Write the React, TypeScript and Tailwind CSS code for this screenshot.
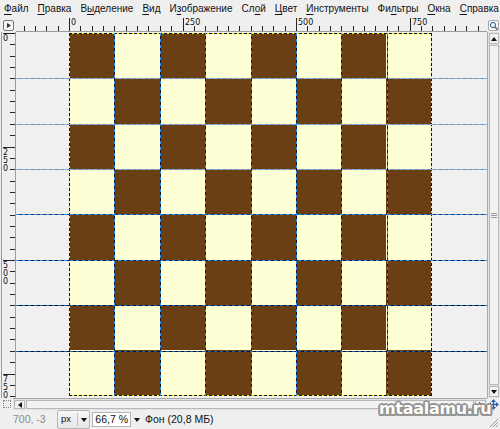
import React from 'react';

const menu: { label: string; u: number }[] = [
  { label: 'Файл', u: 0 },
  { label: 'Правка', u: 0 },
  { label: 'Выделение', u: 1 },
  { label: 'Вид', u: 0 },
  { label: 'Изображение', u: 1 },
  { label: 'Слой', u: 2 },
  { label: 'Цвет', u: 0 },
  { label: 'Инструменты', u: 0 },
  { label: 'Фильтры', u: 2 },
  { label: 'Окна', u: 0 },
  { label: 'Справка', u: 0 },
];

const STEP = 11.35;

// guide lines, positions relative to the canvas box
const hGuides = [
  'top-[46px] bg-[repeating-linear-gradient(90deg,#7fb4e6_0px,#7fb4e6_3px,#8c8c8c_3px,#8c8c8c_6px)]',
  'top-[92px] bg-[repeating-linear-gradient(90deg,#7fb4e6_0px,#7fb4e6_3px,#8c8c8c_3px,#8c8c8c_6px)]',
  'top-[137px] bg-[repeating-linear-gradient(90deg,#7fb4e6_0px,#7fb4e6_3px,#8c8c8c_3px,#8c8c8c_6px)]',
  'top-[182px] bg-[repeating-linear-gradient(90deg,#2b8cf2_0px,#2b8cf2_3px,#3a3a3a_3px,#3a3a3a_6px)]',
  'top-[228px] bg-[repeating-linear-gradient(90deg,#2b8cf2_0px,#2b8cf2_3px,#1a1a1a_3px,#1a1a1a_6px)]',
  'top-[273px] bg-[repeating-linear-gradient(90deg,#1d5fa8_0px,#1d5fa8_3px,#111_3px,#111_6px)]',
  'top-[319px] bg-[repeating-linear-gradient(90deg,#1d5fa8_0px,#1d5fa8_3px,#111_3px,#111_6px)]',
];

const vGuides = [
  'left-[98px]',
  'left-[144px]',
  'left-[189px]',
  'left-[235px]',
  'left-[280px]',
  'left-[325px]',
  'left-[371px]',
];

const HRuler = () => {
  const ticks = [];
  for (let k = -4; k <= 38; k++) {
    const x = Math.round(53 + k * STEP) + 0.5;
    if (x < 0 || x > 466) continue;
    const major = k % 10 === 0;
    ticks.push(
      <line key={k} x1={x} x2={x} y1={major ? 0 : 8} y2={13} stroke="#222" strokeWidth={1} />
    );
    if (major && k >= 0) {
      ticks.push(
        <text key={'t' + k} x={x + 1.5} y={7} fontSize={8} fill="#111" fontFamily="DejaVu Sans, sans-serif">
          {k * 25}
        </text>
      );
    }
  }
  return (
    <svg width={471} height={14} className="block">
      <line x1={0} x2={471} y1={13.5} y2={13.5} stroke="#9a9a9a" />
      {ticks}
    </svg>
  );
};

const VRuler = () => {
  const ticks = [];
  for (let k = 0; k <= 32; k++) {
    const y = Math.round(1 + k * STEP) + 0.5;
    const major = k % 10 === 0;
    ticks.push(
      <line key={k} y1={y} y2={y} x1={major ? 3 : 10} x2={15} stroke="#222" strokeWidth={1} />
    );
    if (major) {
      String(k * 25)
        .split('')
        .forEach((d, i) => {
          ticks.push(
            <text key={'t' + k + i} x={3} y={y + 7.5 + i * 8} fontSize={8} fill="#111" fontFamily="DejaVu Sans, sans-serif">
              {d}
            </text>
          );
        });
    }
  }
  return (
    <svg width={16} height={366} className="block">
      <line x1={1.5} x2={1.5} y1={0} y2={366} stroke="#9a9a9a" />
      <line x1={15.5} x2={15.5} y1={0} y2={366} stroke="#9a9a9a" />
      {ticks}
    </svg>
  );
};

const Arrow = ({ dir }: { dir: 'up' | 'down' | 'left' | 'right' }) => {
  const pts = {
    up: '1,5 4,1 7,5',
    down: '1,1 4,5 7,1',
    left: '5,1 1,4 5,7',
    right: '1,1 5,4 1,7',
  }[dir];
  const w = dir === 'up' || dir === 'down' ? 8 : 6;
  const h = dir === 'up' || dir === 'down' ? 6 : 8;
  return (
    <svg width={w} height={h} className="block">
      <polygon points={pts} fill="#111" />
    </svg>
  );
};

export default function App() {
  const cells = Array.from({ length: 64 }, (_, i) => ((Math.floor(i / 8) + (i % 8)) % 2 === 0));

  return (
    <div className="relative w-[500px] h-[429px] bg-[#efefef] flex flex-col overflow-hidden font-['Liberation_Sans',sans-serif] text-[10.5px] text-[#111] select-none">
      {/* menu bar */}
      <div className="h-[18px] flex items-center pl-[4px] gap-[9px] shrink-0 text-[10px]">
        {menu.map((m) => (
          <span key={m.label} className="leading-none whitespace-nowrap">
            {m.label.slice(0, m.u)}
            <span className="underline underline-offset-2">{m.label[m.u]}</span>
            {m.label.slice(m.u + 1)}
          </span>
        ))}
      </div>

      {/* ruler row */}
      <div className="h-[14px] flex shrink-0">
        <div className="w-[16px] flex items-center justify-center">
          <svg width={11} height={11} className="block">
            <rect x={0.5} y={0.5} width={10} height={10} rx={1.5} fill="#f4f4f4" stroke="#777" />
            <polygon points="4,3 8,5.5 4,8" fill="#333" />
          </svg>
        </div>
        <div className="w-[471px]">
          <HRuler />
        </div>
        <div className="w-[13px] flex items-center justify-center">
          <svg width={11} height={11} className="block">
            <rect x={0.5} y={0.5} width={10} height={10} rx={1.5} fill="#f4f4f4" stroke="#aaa" />
            <circle cx={5} cy={5} r={2.6} fill="#e6eef8" stroke="#3a5f8f" strokeWidth={1} />
            <line x1={7} y1={7} x2={9.5} y2={9.5} stroke="#3a5f8f" strokeWidth={1.4} />
          </svg>
        </div>
      </div>

      {/* ruler + canvas + vertical scrollbar */}
      <div className="h-[366px] flex shrink-0">
        <div className="w-[16px]">
          <VRuler />
        </div>
        <div className="relative w-[471px] bg-[#f0f0f0] pl-[53px] pt-[1px] overflow-hidden">
          <div className="w-[363px] h-[363px] border border-dashed border-[#111] bg-[#f2f200]">
            <div className="grid grid-cols-8 grid-rows-8 w-full h-full">
              {cells.map((dark, i) => (
                <div key={i} className={dark ? 'bg-[#6a3f13]' : 'bg-[#ffffd6]'} />
              ))}
            </div>
          </div>
          {hGuides.map((c) => (
            <div key={c} className={'absolute left-0 right-0 h-[1px] ' + c} />
          ))}
          {vGuides.map((c) => (
            <div
              key={c}
              className={
                'absolute top-[1px] h-[363px] w-[1px] bg-[repeating-linear-gradient(180deg,#2b8cf2_0px,#2b8cf2_3px,#1a1a1a_3px,#1a1a1a_6px)] ' +
                c
              }
            />
          ))}
        </div>
        <div className="w-[13px] flex flex-col border-l border-[#a8a8a8] bg-[#e2e2e2]">
          <div className="h-[11px] mt-[1px] mx-[1px] flex items-center justify-center bg-[#f2f2f2] border border-[#b8b8b8]">
            <Arrow dir="up" />
          </div>
          <div className="flex-1 mx-[1px] my-[1px] bg-[#f2f2f2] border border-[#b8b8b8] flex items-center justify-center">
            <div className="flex flex-col gap-[1px]">
              <div className="w-[6px] h-[1px] bg-[#999]" />
              <div className="w-[6px] h-[1px] bg-[#999]" />
              <div className="w-[6px] h-[1px] bg-[#999]" />
            </div>
          </div>
          <div className="h-[11px] mb-[1px] mx-[1px] flex items-center justify-center bg-[#f2f2f2] border border-[#b8b8b8]">
            <Arrow dir="down" />
          </div>
        </div>
      </div>

      {/* horizontal scrollbar */}
      <div className="h-[12px] flex shrink-0">
        <div className="w-[13px] flex items-center justify-center">
          <div className="w-[8px] h-[8px] border border-dotted border-[#888]" />
        </div>
        <div className="w-[474px] flex border-t border-[#a8a8a8] bg-[#e2e2e2]">
          <div className="w-[11px] my-[1px] ml-[1px] flex items-center justify-center bg-[#f2f2f2] border border-[#b8b8b8]">
            <Arrow dir="left" />
          </div>
          <div className="flex-1 m-[1px] bg-[#f2f2f2] border border-[#b8b8b8]" />
          <div className="w-[11px] my-[1px] mr-[1px] flex items-center justify-center bg-[#f2f2f2] border border-[#b8b8b8]">
            <Arrow dir="right" />
          </div>
        </div>
        <div className="w-[13px] flex items-center justify-center">
          <svg width={11} height={11} className="block">
            <g fill="#2a5fa8">
              <polygon points="5.5,0 8,3 3,3" />
              <polygon points="5.5,11 8,8 3,8" />
              <polygon points="0,5.5 3,3 3,8" />
              <polygon points="11,5.5 8,3 8,8" />
            </g>
            <line x1={5.5} y1={2} x2={5.5} y2={9} stroke="#2a5fa8" strokeWidth={1.4} />
            <line x1={2} y1={5.5} x2={9} y2={5.5} stroke="#2a5fa8" strokeWidth={1.4} />
          </svg>
        </div>
      </div>

      {/* status bar */}
      <div className="h-[19px] flex items-stretch shrink-0">
        <div className="w-[57px] pl-[13px] flex items-center text-[#8c8c8c]">700, -3</div>
        <div className="w-[33px] flex items-center border border-[#b4b4b4] rounded-[2px] bg-[linear-gradient(#f7f7f7,#e6e6e6)]">
          <span className="w-[19px] pl-[3px] text-[9.5px]">px</span>
          <div className="w-[1px] h-[13px] bg-[#c0c0c0]" />
          <div className="flex-1 flex items-center justify-center">
            <Arrow dir="down" />
          </div>
        </div>
        <div className="ml-[2px] w-[39px] my-[2px] bg-white border border-[#b4b4b4] flex items-center justify-end pr-[2px]">
          66,7 %
        </div>
        <div className="w-[11px] flex items-center justify-center">
          <Arrow dir="down" />
        </div>
        <div className="ml-[3px] flex items-center">Фон (20,8 МБ)</div>
      </div>

      {/* watermark */}
      <div className="absolute left-[379px] top-[401px] font-['DejaVu_Sans',sans-serif] font-bold text-[16px] tracking-[-0.3px] text-white leading-none [text-shadow:0_0_2px_#7a7a7a,1.5px_1.5px_0_#9a9a9a,-1.5px_-1.5px_0_#9a9a9a,1.5px_-1.5px_0_#9a9a9a,-1.5px_1.5px_0_#9a9a9a,0_2px_0_#9a9a9a,0_-2px_0_#9a9a9a,2px_0_0_#9a9a9a,-2px_0_0_#9a9a9a]">
        mtaalamu.ru
      </div>

      {/* resize grip */}
      <svg width={10} height={10} className="absolute right-[1px] bottom-[1px]">
        <g stroke="#9a9a9a" strokeWidth={1}>
          <line x1={9} y1={1} x2={1} y2={9} />
          <line x1={9} y1={4} x2={4} y2={9} />
          <line x1={9} y1={7} x2={7} y2={9} />
        </g>
      </svg>
    </div>
  );
}
